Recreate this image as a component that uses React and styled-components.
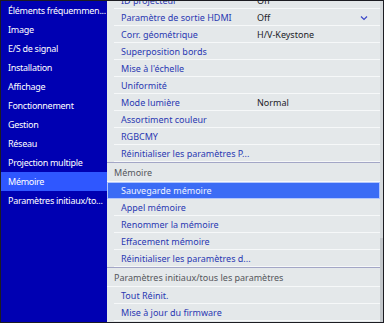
import React from "react";
import styled, { createGlobalStyle } from "styled-components";

const GlobalStyle = createGlobalStyle`
  body {
    margin: 0;
    font-family: "Noto Sans", "Open Sans", sans-serif;
  }
`;

const Frame = styled.div`
  width: 384px;
  height: 323px;
  box-sizing: border-box;
  border: 1px solid #1c1c22;
  display: flex;
  overflow: hidden;
`;

const Sidebar = styled.div`
  width: 106px;
  flex: none;
  background: #0000b2;
  display: flex;
  flex-direction: column;
  overflow: hidden;
`;

const SideItem = styled.div`
  height: 19px;
  display: flex;
  align-items: center;
  padding-left: 7px;
  font-size: 9px;
  letter-spacing: -0.28px;
  color: #ffffff;
  white-space: nowrap;
  background: ${(p) => (p.active ? "#2f57ff" : "transparent")};
`;

const Panel = styled.div`
  flex: 1;
  display: flex;
  background: #e4e8ea;
  overflow: hidden;
`;

const List = styled.div`
  flex: 1;
  margin-top: -9px;
  display: flex;
  flex-direction: column;
`;

const Row = styled.div`
  position: relative;
  height: 17px;
  flex: none;
  box-sizing: border-box;
  display: grid;
  grid-template-columns: 136px 1fr 20px;
  align-items: center;
  padding-left: 14px;
  font-size: 9px;
  white-space: nowrap;
  color: ${(p) => (p.selected ? "#eef2ff" : "#2a38b2")};
  background: ${(p) => (p.selected ? "#3b6cf5" : "transparent")};
  box-shadow: ${(p) =>
    p.selected ? "inset 0 0 0 1px rgba(230,236,255,0.7)" : "none"};

  &::after {
    content: "";
    position: absolute;
    left: 7px;
    right: 0;
    bottom: 0;
    height: 1px;
    background: ${(p) => (p.selected ? "transparent" : "#f6f8f9")};
  }
`;

const Value = styled.span`
  color: #222228;
`;

const Chevron = styled.svg`
  width: 8px;
  height: 6px;
  fill: none;
  stroke: #3a46c8;
  stroke-width: 1.2px;
`;

const Header = styled.div`
  height: 20px;
  flex: none;
  box-sizing: border-box;
  display: flex;
  align-items: center;
  padding-left: 7px;
  font-size: 9px;
  color: #55575c;
  border-top: 1px solid #a3a6c6;
  border-bottom: 1px solid #f6f8f9;
`;

const Scrollbar = styled.div`
  width: 3px;
  flex: none;
  display: flex;
  flex-direction: column;
  background: #d6dadd;
`;

const Thumb = styled.div`
  margin-top: auto;
  height: 84px;
  background: #c3c7cb;
`;

const sideItems = [
  "Éléments fréquemmen...",
  "Image",
  "E/S de signal",
  "Installation",
  "Affichage",
  "Fonctionnement",
  "Gestion",
  "Réseau",
  "Projection multiple",
  "Mémoire",
  "Paramètres initiaux/to...",
];

const entries = [
  { label: "ID projecteur", value: "Off" },
  { label: "Paramètre de sortie HDMI", value: "Off", menu: true },
  { label: "Corr. géométrique", value: "H/V-Keystone" },
  { label: "Superposition bords" },
  { label: "Mise à l'échelle" },
  { label: "Uniformité" },
  { label: "Mode lumière", value: "Normal" },
  { label: "Assortiment couleur" },
  { label: "RGBCMY" },
  { label: "Réinitialiser les paramètres P..." },
  { header: "Mémoire" },
  { label: "Sauvegarde mémoire", selected: true },
  { label: "Appel mémoire" },
  { label: "Renommer la mémoire" },
  { label: "Effacement mémoire" },
  { label: "Réinitialiser les paramètres d..." },
  { header: "Paramètres initiaux/tous les paramètres" },
  { label: "Tout Réinit." },
  { label: "Mise à jour du firmware" },
];

export default function App() {
  return (
    <>
      <GlobalStyle />
      <Frame>
        <Sidebar>
          {sideItems.map((s) => (
            <SideItem key={s} active={s === "Mémoire"}>
              {s}
            </SideItem>
          ))}
        </Sidebar>
        <Panel>
          <List>
            {entries.map((e, i) =>
              e.header ? (
                <Header key={i}>{e.header}</Header>
              ) : (
                <Row key={i} selected={e.selected}>
                  <span>{e.label}</span>
                  <Value>{e.value}</Value>
                  {e.menu ? (
                    <Chevron viewBox="0 0 8 6">
                      <polyline points="1 1.5 4 4.5 7 1.5" />
                    </Chevron>
                  ) : (
                    <span />
                  )}
                </Row>
              )
            )}
          </List>
          <Scrollbar>
            <Thumb />
          </Scrollbar>
        </Panel>
      </Frame>
    </>
  );
}
